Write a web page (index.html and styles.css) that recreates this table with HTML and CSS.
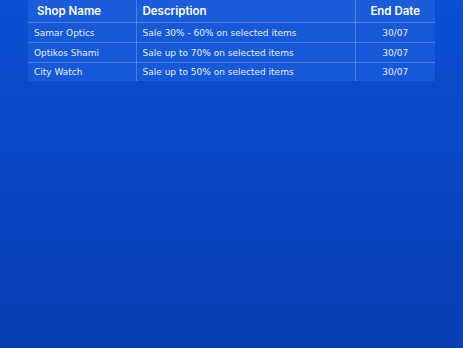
FILE: index.html
```html
<!DOCTYPE html>
<html>
<head>
<meta charset="utf-8">
<link rel="stylesheet" href="styles.css">
</head>
<body>
<div class="page">
  <table class="deals">
    <colgroup>
      <col class="w-shop">
      <col class="w-desc">
      <col class="w-date">
    </colgroup>
    <thead>
      <tr>
        <th class="c-shop">Shop Name</th>
        <th class="c-desc">Description</th>
        <th class="c-date">End Date</th>
      </tr>
    </thead>
    <tbody>
      <tr>
        <td class="c-shop">Samar Optics</td>
        <td class="c-desc">Sale 30% - 60% on selected items</td>
        <td class="c-date">30/07</td>
      </tr>
      <tr>
        <td class="c-shop">Optikos Shami</td>
        <td class="c-desc">Sale up to 70% on selected items</td>
        <td class="c-date">30/07</td>
      </tr>
      <tr>
        <td class="c-shop">City Watch</td>
        <td class="c-desc">Sale up to 50% on selected items</td>
        <td class="c-date">30/07</td>
      </tr>
    </tbody>
  </table>
</div>
</body>
</html>
```
FILE: styles.css
```css
html, body {
  margin: 0;
  padding: 0;
}
body {
  width: 463px;
  height: 348px;
  background: linear-gradient(180deg, #0b4fd2 0%, #0846c4 50%, #073eb3 100%);
  font-family: "DejaVu Sans", "Noto Sans", sans-serif;
  color: #ffffff;
  overflow: hidden;
}
.page {
  padding: 0 28px;
}
.deals {
  width: 407px;
  table-layout: fixed;
  border-collapse: collapse;
  background: #1659d8;
}
.w-shop { width: 108px; }
.w-desc { width: 219px; }
.w-date { width: 80px; }
.deals th {
  height: 22px;
  padding: 0;
  font-family: Inter, "DejaVu Sans", sans-serif;
  font-size: 11.5px;
  font-weight: 600;
  text-align: left;
  background: #1a5cda;
  border-bottom: 1px solid rgba(255,255,255,0.22);
  white-space: nowrap;
}
.deals td {
  height: 19px;
  padding: 0;
  font-size: 9px;
  color: #e6eeff;
  border-bottom: 1px solid rgba(255,255,255,0.22);
  white-space: nowrap;
}
.deals tbody tr:last-child td {
  height: 18px;
  border-bottom: none;
}
.deals .c-shop {
  border-right: 1px solid rgba(255,255,255,0.22);
}
.deals th.c-shop { padding-left: 9px; }
.deals td.c-shop { padding-left: 6px; }
.deals .c-desc {
  padding-left: 6px;
  border-right: 1px solid rgba(255,255,255,0.22);
}
.deals .c-date {
  text-align: center;
}
```
